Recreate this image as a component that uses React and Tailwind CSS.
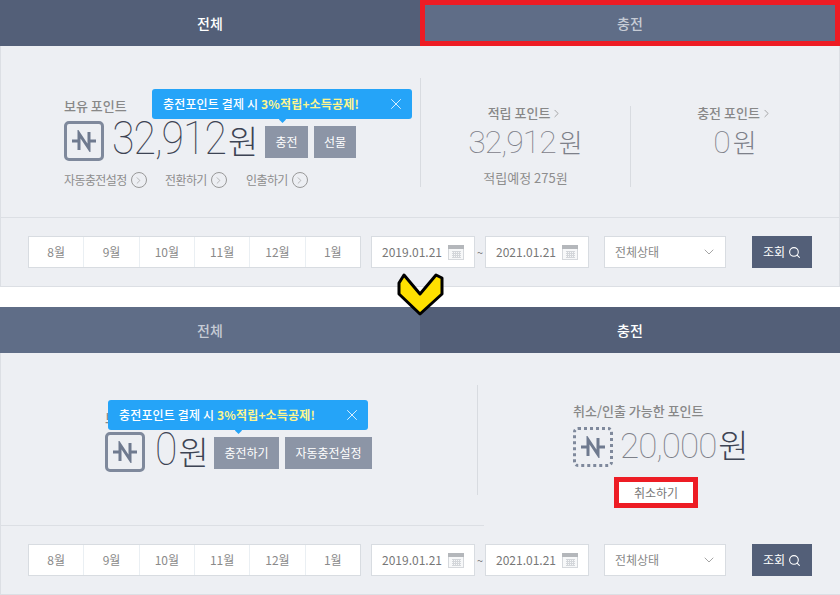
import { Search, ChevronDown, ChevronRight, X } from "lucide-react";

const months = ["8월", "9월", "10월", "11월", "12월", "1월"];

const CalendarIcon = () => (
  <svg width="16" height="15" viewBox="0 0 16 15" className="shrink-0">
    <rect x="0.5" y="0.5" width="15" height="14" fill="#f7f8f9" stroke="#d5d8dc" />
    <rect x="0" y="0" width="16" height="4" fill="#b4b7bb" />
    <path d="M4 6.5h9M4 8.5h9M4 10.5h9M4 12.5h9M5.5 6v7M7.5 6v7M9.5 6v7M11.5 6v7" stroke="#d3d6da" strokeWidth="1" fill="none" />
  </svg>
);

const PointIcon = ({ dashed }) => (
  <div className={`flex h-10 w-10 shrink-0 items-center justify-center rounded-[5px] border-[3px] border-[#7f899c] ${dashed ? "border-dotted" : ""}`}>
    <svg width="26" height="22" viewBox="0 0 26 22" fill="none" stroke="#6f7a8f" strokeWidth="3">
      <path d="M8 20V3.5L18 18.5V2" />
      <path d="M1 11h6M19 11h6" />
    </svg>
  </div>
);

const Tabs = ({ active }) => (
  <div className="flex h-[46px]">
    <div className={`flex w-[420px] items-center justify-center text-[14px] font-medium ${active === 0 ? "bg-[#535f78] text-white" : "bg-[#5f6d87] text-[#c6cbd5]"}`}>
      전체
    </div>
    <div className={`flex flex-1 items-center justify-center text-[14px] font-medium ${active === 1 ? "bg-[#535f78] text-white" : "border-[5px] border-[#ed1c24] bg-[#5f6d87] text-[#c6cbd5]"}`}>
      충전
    </div>
  </div>
);

const DateBox = ({ value }) => (
  <div className="flex h-[32px] w-[104px] items-center justify-between border border-[#d8dce1] bg-white pl-[10px] pr-[10px] text-[12px] text-[#777]">
    <span>{value}</span>
    <CalendarIcon />
  </div>
);

const Filter = () => (
  <div className="flex items-center pl-[28px]">
    <div className="flex h-[32px] w-[333px] border border-[#d8dce1] bg-white text-[12px] text-[#8a8a8a]">
      {months.map((m, i) => (
        <div key={m} className={`flex flex-1 items-center justify-center ${i > 0 ? "border-l border-[#eaeff3]" : ""}`}>
          {m}
        </div>
      ))}
    </div>
    <div className="ml-[10px]"><DateBox value="2019.01.21" /></div>
    <span className="w-[10px] text-center text-[11px] text-[#777]">~</span>
    <DateBox value="2021.01.21" />
    <div className="ml-[15px] flex h-[32px] w-[122px] items-center justify-between border border-[#d8dce1] bg-white pl-[10px] pr-[8px] text-[12px] text-[#888]">
      <span>전체상태</span>
      <ChevronDown size={16} strokeWidth={1} color="#777" />
    </div>
    <div className="ml-[26px] flex h-[32px] w-[60px] items-center justify-center gap-[3px] bg-[#535f78] text-[12px] text-white">
      조회 <Search size={13} strokeWidth={2} />
    </div>
  </div>
);

const Tooltip = ({ className, arrow }) => (
  <div className={`absolute flex h-[30px] w-[260px] items-center justify-between rounded-[3px] bg-[#25a4f8] pl-[11px] pr-[7px] text-[12px] font-medium tracking-[0.15px] text-white ${className}`}>
    <span>
      충전포인트 결제 시 <b className="font-bold text-[#fdf58e]">3%적립+소득공제!</b>
    </span>
    <X size={18} strokeWidth={1.1} />
    <div className={`absolute top-[28px] h-[5px] w-[5px] rotate-45 bg-[#25a4f8] ${arrow}`} />
  </div>
);

const GrayBtn = ({ children, className }) => (
  <div className={`mt-[2px] flex h-[32px] items-center justify-center bg-[#8c95a6] text-[12px] text-white ${className}`}>{children}</div>
);

const CircleLink = ({ children, className }) => (
  <div className={`flex items-center gap-[4px] ${className}`}>
    <span className="tracking-[-0.6px]">{children}</span>
    <span className="flex h-[16px] w-[16px] items-center justify-center rounded-full border border-[#999]">
      <ChevronRight size={11} strokeWidth={1.2} color="#888" />
    </span>
  </div>
);

const Money = ({ num, size, won, color }) => (
  <div className={`flex items-baseline ${color}`}>
    <span className={`inline-block font-thin tracking-[-1px] ${size}`} style={{ fontFamily: "Roboto, sans-serif" }}>{num}</span>
    <span className={won}>원</span>
  </div>
);

const SidePoint = ({ title, num, sub, className }) => (
  <div className={`flex flex-col items-center pt-[57px] ${className}`}>
    <div className="flex h-[20px] items-center text-[13px] font-medium text-[#888]">
      {title}
      <ChevronRight size={13} strokeWidth={1.3} />
    </div>
    <div className="flex h-[38px] items-center">
      <Money num={num} size="text-[32px]" won="ml-[3px] text-[26px] font-extralight" color="text-[#7d8089]" />
    </div>
    {sub && <div className="mt-[8px] text-[13px] leading-[18px] text-[#8d8d8d]">{sub}</div>}
  </div>
);

export default function App() {
  return (
    <div className="relative h-[595px] w-[840px] overflow-hidden bg-white" style={{ fontFamily: '"Noto Sans CJK KR", "Noto Sans", sans-serif' }}>
      {/* 위 화면 */}
      <Tabs active={0} />
      <div className="h-[241px] border border-t-0 border-[#dcdfe4] bg-[#edeff3]">
        <div className="relative flex h-[172px] border-b border-[#dcdfe4]">
          <div className="relative w-[419px] pl-[63px] pt-[51px]">
            <div className="text-[13px] font-medium leading-[18px] text-[#888]">보유 포인트</div>
            <div className="mt-[6px] flex h-[40px] items-center">
              <PointIcon />
              <div className="ml-[8px] w-[145px]">
                <Money num="32,912" size="origin-[50%_70%] scale-y-[1.13] text-[41px]" won="ml-[2px] text-[33px] font-extralight" color="text-[#3d4454]" />
              </div>
              <GrayBtn className="ml-[8px] w-[43px]">충전</GrayBtn>
              <GrayBtn className="ml-[6px] w-[42px]">선물</GrayBtn>
            </div>
            <div className="mt-[10px] flex text-[12px] text-[#8d8d8d]">
              <CircleLink className="w-[101px]">자동충전설정</CircleLink>
              <CircleLink className="w-[81px]">전환하기</CircleLink>
              <CircleLink>인출하기</CircleLink>
            </div>
            <Tooltip className="left-[151px] top-[43px]" arrow="left-[128px]" />
          </div>
          <div className="mt-[32px] h-[109px] w-px bg-[#d8dbe0]" />
          <SidePoint title="적립 포인트" num="32,912" sub="적립예정 275원" className="w-[209px]" />
          <div className="mt-[60px] h-[81px] w-px bg-[#d8dbe0]" />
          <SidePoint title="충전 포인트" num="0" className="flex-1" />
        </div>
        <div className="pt-[18px] -ml-px"><Filter /></div>
      </div>

      {/* 아래 화면 */}
      <div className="mt-[20px]">
        <Tabs active={1} />
      </div>
      <div className="relative h-[242px] border-l border-[#dcdfe4] bg-[#edeff3]">
        <div className="flex h-[172px]">
          <div className="relative w-[476px] pl-[104px] pt-[56px]">
            <div className="text-[13px] font-medium leading-[18px] text-[#888]">보유 포인트</div>
            <div className="mt-[5px] flex h-[40px] items-center">
              <PointIcon />
              <div className="ml-[10px] w-[50px]">
                <Money num="0" size="origin-[50%_70%] scale-y-[1.13] text-[41px]" won="ml-[2px] text-[33px] font-extralight" color="text-[#3d4454]" />
              </div>
              <GrayBtn className="ml-[9px] w-[65px]">충전하기</GrayBtn>
              <GrayBtn className="ml-[6px] w-[87px]">자동충전설정</GrayBtn>
            </div>
            <Tooltip className="left-[107px] top-[47px]" arrow="left-[128px]" />
          </div>
          <div className="mt-[32px] h-[110px] w-px bg-[#d8dbe0]" />
          <div className="flex flex-1 flex-col items-start pl-[95px] pt-[49px]">
            <div className="text-[13px] font-medium leading-[18px] text-[#888]">취소/인출 가능한 포인트</div>
            <div className="mt-[7px] flex h-[40px] items-center">
              <PointIcon dashed />
              <div className="ml-[7px]">
                <Money num="20,000" size="text-[35px]" won="ml-[2px] text-[33px] font-extralight text-[#3d4454]" color="text-[#7d8089]" />
              </div>
            </div>
            <div className="ml-[41px] mt-[10px] flex h-[31px] w-[84px] items-center justify-center border-[5px] border-[#ed1c24] bg-white text-[12px] text-[#777]">
              취소하기
            </div>
          </div>
        </div>
        <div className="h-px w-[483px] bg-[#dcdfe4]" />
        <div className="pt-[18px] -ml-px"><Filter /></div>
      </div>
      <div className="absolute bottom-0 left-0 h-px w-full bg-[#dcdfe4]" />

      {/* 화살표 */}
      <svg className="absolute left-[390px] top-[268px]" width="60" height="54" viewBox="390 268 60 54">
        <path d="M399 283L404 275L420 294L436 275L442 278V294L420 314L399 294Z" fill="#ffe000" stroke="#000" strokeWidth="3" strokeLinejoin="round" />
      </svg>
    </div>
  );
}
